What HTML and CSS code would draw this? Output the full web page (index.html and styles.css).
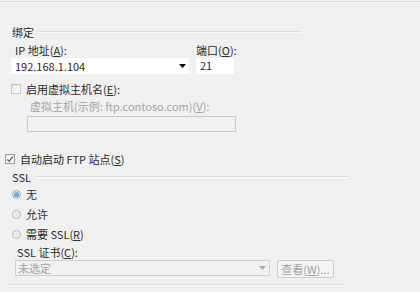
FILE: index.html
```html
<!DOCTYPE html>
<html lang="zh-CN">
<head>
    <meta charset="UTF-8">
    <title>绑定和 SSL 设置</title>
    <link rel="stylesheet" href="styles.css">
</head>
<body>

<div class="top-rule"></div>

<div class="page">
    <div class="group-title binding-title"><span>绑定</span><i class="rule"></i></div>

    <div class="field-row">
        <div class="field">
            <label class="lbl ip-lbl">IP 地址(<u>A</u>):</label>
            <div class="combo ip-combo">
                <span>192.168.1.104</span>
                <svg width="7" height="4" viewBox="0 0 7 4"><path d="M0 0h7L3.5 4z" fill="#000"/></svg>
            </div>
        </div>
        <div class="field">
            <label class="lbl">端口(<u>O</u>):</label>
            <div class="textbox port-box">21</div>
        </div>
    </div>

    <div class="check-row vhost-check">
        <span class="checkbox"></span>
        <span>启用虚拟主机名(<u>E</u>):</span>
    </div>

    <div class="vhost disabled">
        <label class="lbl">虚拟主机(示例: ftp.contoso.com)(<u>V</u>):</label>
        <div class="textbox vhost-box"></div>
    </div>

    <div class="check-row autostart">
        <span class="checkbox checked">
            <svg width="9" height="9" viewBox="0 0 9 9"><path d="M1.5 4.5l2 2.2L7.6 1.2" fill="none" stroke="#4a5a70" stroke-width="1.3"/></svg>
        </span>
        <span>自动启动 FTP 站点(<u>S</u>)</span>
    </div>

    <div class="group-title ssl-title"><span>SSL</span><i class="rule"></i></div>

    <div class="radio-row"><span class="radio on"></span><span>无</span></div>
    <div class="radio-row"><span class="radio"></span><span>允许</span></div>
    <div class="radio-row"><span class="radio"></span><span>需要 SSL(<u>R</u>)</span></div>

    <div class="cert">
        <label class="lbl">SSL 证书(<u>C</u>):</label>
        <div class="cert-row">
            <div class="combo cert-combo disabled">
                <span>未选定</span>
                <svg width="7" height="4" viewBox="0 0 7 4"><path d="M0 0h7L3.5 4z" fill="#a8a8a8"/></svg>
            </div>
            <button class="btn" disabled>查看(<u>W</u>)...</button>
        </div>
    </div>

    <div class="bottom-rule"></div>
</div>

</body>
</html>
```

FILE: styles.css
```css
body {
    margin: 0;
    background: #f0f0f0;
    font-family: "Noto Sans CJK SC", "Noto Sans", sans-serif;
    font-size: 11px;
    color: #2a2a2a;
    width: 420px;
    height: 292px;
    overflow: hidden;
}
u {
    text-decoration: underline;
    text-underline-offset: 1px;
}
.top-rule {
    margin-top: 1px;
    height: 1px;
    background: #dcdcdc;
    border-bottom: 1px solid #f8f8f8;
}
.page {
    padding-left: 11px;
}
.group-title {
    display: flex;
    align-items: center;
    height: 14px;
    line-height: 14px;
}
.group-title span {
    padding-left: 1px;
    margin-right: 4px;
}
.group-title .rule {
    height: 1px;
    background: #dcdcdc;
    border-bottom: 1px solid #fafafa;
}
.binding-title {
    margin-top: 22px;
}
.binding-title .rule {
    width: 264px;
}
.lbl {
    display: block;
    height: 14px;
    line-height: 14px;
}
.field-row {
    display: flex;
    gap: 7px;
    margin-top: 4px;
}
.field .lbl {
    margin-bottom: 1px;
}
.ip-lbl {
    padding-left: 4px;
}
.combo, .textbox {
    box-sizing: border-box;
    height: 16px;
    line-height: 15px;
    background: #fff;
    padding-left: 4px;
}
.combo {
    display: flex;
    align-items: center;
    justify-content: space-between;
    padding-right: 3px;
}
.ip-combo {
    width: 178px;
}
.port-box {
    width: 38px;
    padding-left: 4px;
}
.check-row {
    display: flex;
    align-items: center;
    height: 14px;
}
.checkbox {
    box-sizing: border-box;
    width: 10px;
    height: 10px;
    border: 1px solid #c6c6c6;
    background: linear-gradient(135deg, #e6e6e6, #fbfbfb);
    margin-right: 5px;
    display: flex;
    align-items: center;
    justify-content: center;
}
.checkbox.checked {
    border-color: #9c9c9c;
    background: #f4f4f4;
}
.vhost-check {
    margin-top: 8px;
}
.vhost {
    margin-top: 3px;
    padding-left: 16px;
}
.vhost .lbl {
    padding-left: 3px;
    margin-bottom: 3px;
}
.disabled {
    color: #a4a4a4;
}
.vhost-box {
    width: 209px;
    height: 16px;
    border: 1px solid #c9c9c9;
    background: #f0f0f0;
}
.autostart {
    margin-top: 20px;
    margin-left: -6px;
}
.ssl-title {
    margin-top: 4px;
}
.ssl-title .rule {
    width: 314px;
}
.radio-row {
    display: flex;
    align-items: center;
    height: 14px;
    margin-top: 6px;
}
.ssl-title + .radio-row {
    margin-top: 3px;
}
.radio {
    box-sizing: border-box;
    width: 9px;
    height: 9px;
    border-radius: 50%;
    border: 1px solid #b4b4b4;
    background: radial-gradient(circle, #e6e6e6 30%, #f7f7f7 70%);
    margin-left: 1px;
    margin-right: 5px;
    position: relative;
}
.radio.on {
    border-color: #a0a6ad;
    background: #f0f0f0;
}
.radio.on::after {
    content: "";
    position: absolute;
    left: 1px;
    top: 1px;
    width: 5px;
    height: 5px;
    border-radius: 50%;
    background: radial-gradient(circle at 40% 35%, #8fc4ec, #2d6fb0);
}
.cert {
    margin-top: 4px;
    padding-left: 4px;
}
.cert .lbl {
    padding-left: 2px;
    margin-bottom: 1px;
}
.cert-row {
    display: flex;
    gap: 7px;
}
.cert-combo {
    width: 255px;
    border: 1px solid #cfcfcf;
    background: #f0f0f0;
    padding-left: 2px;
}
.btn {
    box-sizing: border-box;
    width: 57px;
    height: 18px;
    padding: 0;
    font-family: inherit;
    font-size: 11px;
    color: #a0a0a0;
    background: #f4f4f4;
    border: 1px solid #cdcdcd;
    border-radius: 2px;
}
.bottom-rule {
    margin-top: 6px;
    margin-left: -3px;
    width: 337px;
    height: 1px;
    background: #dcdcdc;
    border-bottom: 1px solid #fafafa;
}
```
